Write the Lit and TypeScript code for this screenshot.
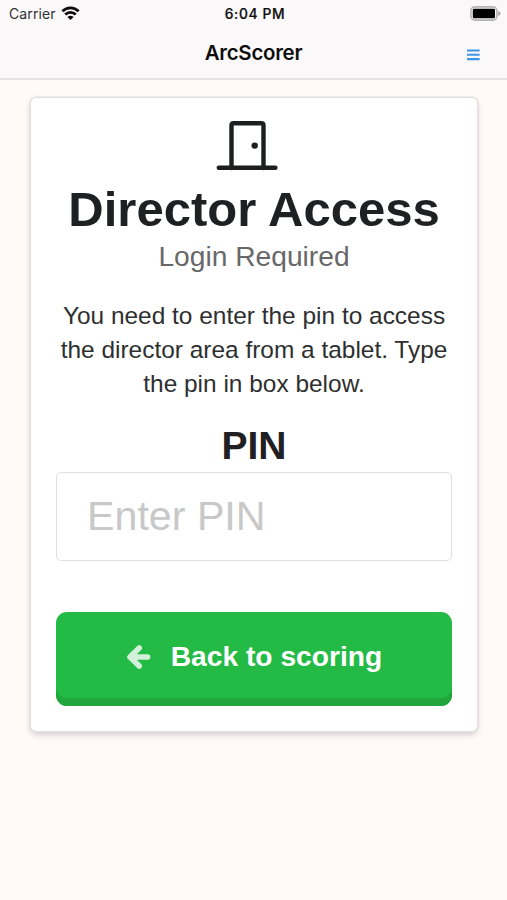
import { LitElement, html, css } from "lit";
import { customElement } from "lit/decorators.js";

@customElement("phone-header")
class PhoneHeader extends LitElement {
  static styles = css`
    :host {
      display: block;
      box-sizing: border-box;
      height: 80px;
      background: #faf8f9;
      border-bottom: 2px solid #e6e4e4;
      color: #0c0c0d;
      font-family: Inter, "Liberation Sans", sans-serif;
    }
    .status,
    .nav {
      display: grid;
      grid-template-columns: 1fr auto 1fr;
      align-items: center;
    }
    .status {
      height: 27px;
      padding: 0 6px 0 9px;
    }
    .nav {
      height: 51px;
      padding: 0 27px;
    }
    .carrier {
      display: flex;
      align-items: center;
      gap: 5px;
      font-size: 14px;
      color: #303032;
      letter-spacing: 0.1px;
    }
    .time {
      font-size: 13.8px;
      font-weight: 500;
      letter-spacing: 0.65px;
      -webkit-text-stroke: 0.2px #0c0c0d;
    }
    .title {
      grid-column: 2;
      margin-top: -1px;
      font-size: 20.4px;
      font-weight: 600;
      letter-spacing: -0.25px;
    }
    .end {
      justify-self: end;
    }
    .menu {
      margin-top: 4px;
    }
    svg {
      display: block;
    }
  `;

  render() {
    return html`
      <div class="status">
        <div class="carrier">
          <span>Carrier</span>
          <svg width="19" height="15" viewBox="0 0 19 15" fill="none" stroke="#0c0c0d" stroke-width="2.8">
            <path d="M1.4 5.3C5.9 .8 13.1 .8 17.6 5.3" />
            <path d="M4.2 8.6C7.2 5.7 11.8 5.7 14.8 8.6" />
            <path d="M6.4 10.9Q9.5 8.5 12.6 10.9L9.5 14Z" fill="#0c0c0d" stroke="none" />
          </svg>
        </div>
        <span class="time">6:04 PM</span>
        <svg class="end" width="31" height="15" viewBox="0 0 31 15">
          <rect x=".9" y=".9" width="26" height="13.2" rx="4" fill="#faf8f9" stroke="#b4b2b3" stroke-width="1.6" />
          <rect x="2.8" y="2.8" width="22.2" height="9.4" rx="1.2" fill="#000" />
          <path d="M28.2 5Q30.6 5.9 30.6 7.5T28.2 10Z" fill="#aaa8a9" />
        </svg>
      </div>
      <div class="nav">
        <span class="title">ArcScorer</span>
        <svg class="end menu" width="13" height="12" viewBox="0 0 13 12" stroke="#3d95e6" stroke-width="2.1">
          <path d="M0 1.5H12.6M0 5.8H12.6M0 10.1H12.6" />
        </svg>
      </div>
    `;
  }
}

@customElement("access-card")
class AccessCard extends LitElement {
  static styles = css`
    :host {
      display: flex;
      flex-direction: column;
      align-items: center;
      box-sizing: border-box;
      height: 633px;
      margin: 18px 30px 0 31px;
      padding: 22px 25px 0;
      background: #fff;
      border-radius: 5px;
      box-shadow: 0 0 0 1.5px #e2e0e1, 0 3px 6px rgba(34, 36, 38, 0.24);
      color: #1f2021;
      font-family: "Liberation Sans", Arial, sans-serif;
      text-align: center;
    }
    .door {
      display: block;
      flex: none;
      margin-right: 14px;
    }
    h1,
    h2,
    p {
      margin: 0;
      white-space: nowrap;
    }
    h1 {
      height: 61px;
      margin-top: 6px;
      font-size: 49px;
      line-height: 62px;
    }
    .subtitle {
      height: 36px;
      color: #686868;
      font-size: 28.2px;
      line-height: 35px;
    }
    .message {
      margin-top: 24px;
      color: #2e2f30;
      font-size: 24.45px;
      line-height: 34.2px;
    }
    h2 {
      height: 48px;
      margin-top: 20px;
      font-size: 39px;
      line-height: 48px;
    }
    .pin {
      box-sizing: border-box;
      width: 396px;
      height: 89px;
      margin-top: 2px;
      padding: 1px 30px 0;
      border: 1.5px solid #e0e0e1;
      border-radius: 5px;
      outline: none;
      background: #fff;
      font: 41.2px "Liberation Sans", Arial, sans-serif;
    }
    .pin::placeholder {
      color: #c8c8c8;
      opacity: 1;
    }
    .back {
      display: flex;
      align-items: center;
      justify-content: center;
      box-sizing: border-box;
      flex: none;
      width: 396px;
      height: 94px;
      margin-top: 51px;
      padding: 0 0 4px;
      border: 0;
      border-radius: 11px;
      background: #23ba46;
      box-shadow: inset 0 -8px 0 #20a63d;
      color: #fff;
      font: bold 28.2px "Liberation Sans", Arial, sans-serif;
      gap: 20px;
    }
  `;

  render() {
    return html`
      <svg class="door" width="62" height="52" viewBox="0 0 62 52" fill="none" stroke="#1d1e1f" stroke-width="4.4" stroke-linecap="round" stroke-linejoin="round">
        <path d="M15.5 48V5.5Q15.5 3.3 17.7 3.3H45.3Q47.5 3.3 47.5 5.5V48" />
        <path d="M2.8 47.7H59.4" />
        <circle cx="38.7" cy="25.6" r="3.2" fill="#1d1e1f" stroke="none" />
      </svg>
      <h1>Director Access</h1>
      <div class="subtitle">Login Required</div>
      <p class="message">
        You need to enter the pin to access<br />the director area from a tablet. Type<br />the pin in box below.
      </p>
      <h2>PIN</h2>
      <input class="pin" placeholder="Enter PIN" aria-label="PIN" />
      <button class="back">
        <svg width="25" height="26" viewBox="0 0 25 26" fill="none" stroke="#d3f1da" stroke-width="5.6" stroke-linecap="round" stroke-linejoin="round">
          <path d="M13.2 3.9L4 13L13.2 22.1M5 13H21.6" />
        </svg>
        <span>Back to scoring</span>
      </button>
    `;
  }
}

@customElement("app-root")
class AppRoot extends LitElement {
  static styles = css`
    :host {
      display: block;
      height: 900px;
      background: #fff9f8;
      overflow: hidden;
    }
  `;

  render() {
    return html`<phone-header></phone-header><access-card></access-card>`;
  }
}
